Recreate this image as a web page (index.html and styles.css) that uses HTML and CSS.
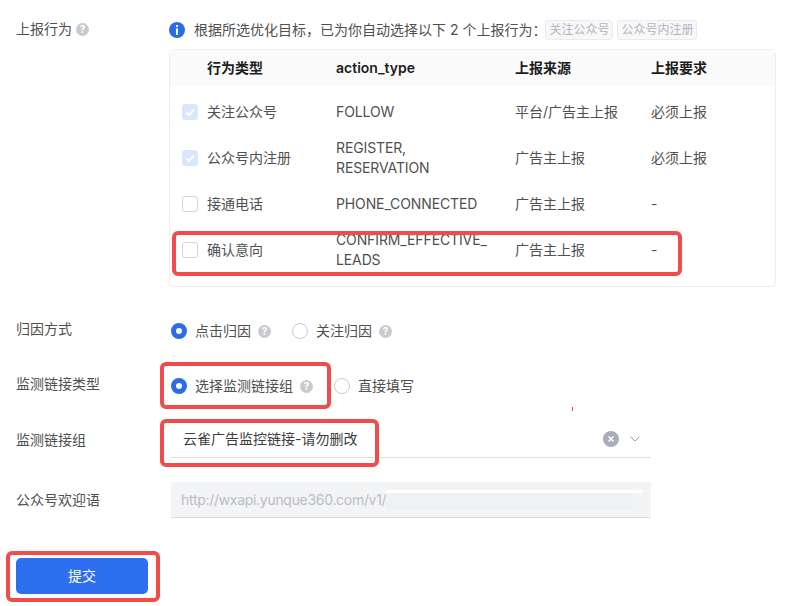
FILE: index.html
```html
<!DOCTYPE html>
<html lang="zh-CN">
<head>
  <meta charset="UTF-8" />
  <title>上报行为</title>
  <link rel="stylesheet" href="styles.css">
</head>
<body>
  <form class="main-form">
    <div class="form-row row-report">
      <div class="form-label">上报行为<span class="help">?</span></div>
      <div class="form-body">
        <div class="notice">
          <svg class="info-icon" width="16" height="16" viewBox="0 0 16 16">
            <circle cx="8" cy="8" r="8" fill="#2b6de5"/>
            <rect x="7" y="3" width="2" height="2" fill="#fff"/>
            <rect x="7" y="6.4" width="2" height="6.4" fill="#fff"/>
          </svg>
          <span>根据所选优化目标，已为你自动选择以下 2 个上报行为：</span>
          <span class="tag">关注公众号</span>
          <span class="tag">公众号内注册</span>
        </div>
        <div class="action-table">
          <div class="table-row table-head">
            <div></div>
            <div>行为类型</div>
            <div>action_type</div>
            <div>上报来源</div>
            <div>上报要求</div>
          </div>
          <div class="table-row">
            <div><span class="check checked"><svg width="16" height="16" viewBox="0 0 16 16"><path d="M4 8.2 7 11 12 5.4" fill="none" stroke="#fff" stroke-width="1.8"/></svg></span></div>
            <div>关注公众号</div>
            <div class="code">FOLLOW</div>
            <div>平台/广告主上报</div>
            <div>必须上报</div>
          </div>
          <div class="table-row">
            <div><span class="check checked"><svg width="16" height="16" viewBox="0 0 16 16"><path d="M4 8.2 7 11 12 5.4" fill="none" stroke="#fff" stroke-width="1.8"/></svg></span></div>
            <div>公众号内注册</div>
            <div class="code">REGISTER,<br>RESERVATION</div>
            <div>广告主上报</div>
            <div>必须上报</div>
          </div>
          <div class="table-row">
            <div><span class="check"></span></div>
            <div>接通电话</div>
            <div class="code">PHONE_CONNECTED</div>
            <div>广告主上报</div>
            <div>-</div>
          </div>
          <div class="table-row">
            <div><span class="check"></span></div>
            <div>确认意向</div>
            <div class="code">CONFIRM_EFFECTIVE_<br>LEADS</div>
            <div>广告主上报</div>
            <div>-</div>
          </div>
        </div>
      </div>
    </div>

    <div class="form-row row-attr">
      <div class="form-label label-up">归因方式</div>
      <div class="radio-group">
        <span class="radio on"></span><span>点击归因</span><span class="help">?</span>
        <span class="radio next"></span><span>关注归因</span><span class="help">?</span>
      </div>
    </div>

    <div class="form-row row-link-type">
      <div class="form-label label-up">监测链接类型</div>
      <div class="radio-group">
        <span class="radio on"></span><span>选择监测链接组</span><span class="help">?</span>
        <span class="radio next"></span><span>直接填写</span>
      </div>
    </div>

    <div class="form-row row-link-group">
      <div class="form-label">监测链接组</div>
      <div class="select-box">
        <span class="select-text">云雀广告监控链接-请勿删改</span>
        <svg class="clear-icon" width="16" height="16" viewBox="0 0 16 16">
          <circle cx="8" cy="8" r="8" fill="#a9adb9"/>
          <path d="M5.5 5.5 10.5 10.5M10.5 5.5 5.5 10.5" stroke="#fff" stroke-width="1.5"/>
        </svg>
        <svg class="arrow-icon" width="10" height="6" viewBox="0 0 10 6">
          <path d="M.5.7 5 5 9.5.7" fill="none" stroke="#9a9ca3" stroke-width="1"/>
        </svg>
      </div>
    </div>

    <div class="form-row row-welcome">
      <div class="form-label">公众号欢迎语</div>
      <div class="input-box">
        <span class="input-text">http://wxapi.yunque360.com/v1/</span>
        <div class="input-mask"></div>
      </div>
    </div>

    <button type="button" class="submit-btn">提交</button>
  </form>

  <div class="mark mark-row"></div>
  <div class="mark mark-radio"></div>
  <div class="mark mark-select"></div>
  <div class="mark mark-submit"></div>
  <div class="red-tick"></div>
</body>
</html>
```

FILE: styles.css
```css
* {
  box-sizing: border-box;
}

body {
  margin: 0;
  position: relative;
  height: 606px;
  overflow: hidden;
  background: #fff;
  color: #505050;
  font-family: Inter, "Noto Sans CJK SC", sans-serif;
  font-size: 14px;
  line-height: 20px;
}

.main-form {
  padding: 20px 22px 0 16px;
}

.form-row {
  display: flex;
}

.form-label {
  width: 153px;
  flex: none;
  display: flex;
  align-items: center;
  height: 20px;
}

.row-report > .form-label {
  margin-top: -1px;
}

.label-up {
  margin-top: -2px;
  margin-bottom: 2px;
}

.form-body {
  flex: 1;
}

.help {
  display: inline-block;
  width: 13px;
  height: 13px;
  margin-left: 7px;
  border-radius: 50%;
  background: #c8cacf;
  color: #fff;
  font-size: 10px;
  font-weight: 700;
  line-height: 13px;
  text-align: center;
}

.form-label .help {
  margin-left: 4px;
}

/* notice line */
.notice {
  display: flex;
  align-items: center;
  height: 20px;
}

.info-icon {
  margin-right: 9px;
}

.tag {
  height: 20px;
  padding: 0 3px;
  margin-right: 4px;
  border: 1px solid #e9eaef;
  border-radius: 3px;
  background: #f8f8fb;
  color: #b2b4ba;
  font-size: 12px;
  line-height: 18px;
}

.notice span:first-of-type + .tag {
  margin-left: -1px;
}

/* table */
.action-table {
  margin-top: 9px;
  height: 238px;
  border: 1px solid #eeeeef;
  border-radius: 5px;
  overflow: hidden;
}

.table-row {
  display: grid;
  grid-template-columns: 37px 129px 179px 136px 1fr;
  align-items: center;
  height: 46px;
}

.table-head {
  height: 36px;
  margin-bottom: 3px;
  background: #fafafa;
  color: #1d1d1f;
  font-weight: 600;
}

.code {
  letter-spacing: -0.12px;
}

.check {
  display: block;
  width: 16px;
  height: 16px;
  margin-left: 12px;
  border: 1px solid #d3d4d8;
  border-radius: 3px;
}

.check.checked {
  border: 0;
  background: #dae6fd;
}

.check svg {
  display: block;
}

/* radios */
.row-attr {
  margin-top: 34px;
}

.row-link-type {
  margin-top: 35px;
}

.radio-group {
  display: flex;
  align-items: center;
  height: 20px;
  margin-left: 2px;
}

.radio {
  width: 16px;
  height: 16px;
  margin-right: 8px;
  border: 1px solid #c9cbd0;
  border-radius: 50%;
  background: #fff;
}

.radio.on {
  border: 5px solid #2b6de5;
}

.radio.next {
  margin-left: 21px;
}

/* select and input */
.row-link-group {
  margin-top: 25px;
  align-items: center;
}

.select-box {
  display: flex;
  align-items: center;
  width: 480px;
  height: 37px;
  margin-left: 2px;
  padding: 0 11px 0 12px;
  border-bottom: 1px solid #dedfe2;
}

.select-text {
  flex: 1;
  color: #3c3c3c;
}

.arrow-icon {
  margin-left: 11px;
}

.row-welcome {
  margin-top: 24px;
  align-items: center;
}

.input-box {
  position: relative;
  width: 480px;
  height: 36px;
  margin-left: 2px;
  padding: 8px 10px 0;
  background: #f3f4f6;
  border-bottom: 1px solid #dcdde0;
  color: #bcbdc1;
}

.input-text {
  letter-spacing: -0.3px;
}

.input-mask {
  position: absolute;
  left: 215px;
  top: 8px;
  width: 257px;
  height: 20px;
  border-top: 3px solid #fff;
  background: linear-gradient(to right, #f0f1f2 0, #f0f1f2 246px, #f3f4f6 246px);
  background-clip: padding-box;
}

.submit-btn {
  display: block;
  width: 132px;
  height: 36px;
  margin-top: 40px;
  border: none;
  border-radius: 5px;
  background: #2e6ef0;
  color: #fff;
  font: inherit;
}

/* red review marks */
.mark {
  position: absolute;
  border: 4px solid #f04c4a;
  border-radius: 6px;
}

.mark-row {
  left: 172px;
  top: 231px;
  width: 510px;
  height: 45px;
}

.mark-radio {
  left: 160px;
  top: 362px;
  width: 171px;
  height: 47px;
}

.mark-select {
  left: 160px;
  top: 419px;
  width: 219px;
  height: 48px;
}

.mark-submit {
  left: 6px;
  top: 551px;
  width: 154px;
  height: 51px;
}

.red-tick {
  position: absolute;
  left: 572px;
  top: 407px;
  width: 1px;
  height: 4px;
  background: #f04c4a;
}
```
